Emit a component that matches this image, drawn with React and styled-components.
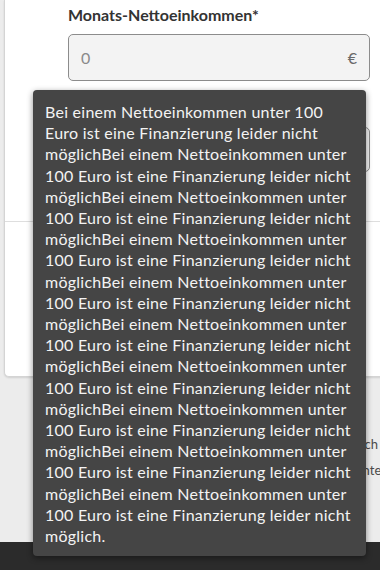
import React from "react";
import styled, { createGlobalStyle } from "styled-components";

const Global = createGlobalStyle`
  html, body { margin: 0; padding: 0; }
  body {
    background: #ececec;
    font-family: Lato, "Open Sans", sans-serif;
    overflow: hidden;
    width: 380px;
    height: 570px;
  }
`;

const Page = styled.div`
  position: relative;
  width: 380px;
  height: 570px;
  display: flex;
  flex-direction: column;
  overflow: hidden;
`;

const Card = styled.div`
  margin-left: 4px;
  width: 380px;
  flex: 0 0 auto;
  background: #fff;
  border: 1px solid #d4d4d4;
  border-top: none;
  border-right: none;
  border-radius: 0 0 0 5px;
  box-shadow: 0 1px 2px rgba(0, 0, 0, 0.12);
  display: flex;
  flex-direction: column;
`;

const Form = styled.div`
  padding: 5px 15px 49px 63px;
  display: flex;
  flex-direction: column;
  gap: 17px;
`;

const Field = styled.div`
  display: flex;
  flex-direction: column;
  gap: 9px;
`;

const Label = styled.div`
  font-weight: 700;
  font-size: 16px;
  line-height: 20px;
  color: #333;
`;

const InputBox = styled.div`
  height: ${(p) => p.$h}px;
  box-sizing: border-box;
  border: 1px solid #8c8c8c;
  border-radius: 5px;
  background: #f3f3f3;
  display: flex;
  align-items: center;
  justify-content: space-between;
  padding: 0 12px 0 12px;
  font-size: 16px;
  color: #8a8a8a;
`;

const Unit = styled.span`
  color: #6a6a6a;
`;

const Divider = styled.div`
  height: 1px;
  background: #dedede;
`;

const CardBottom = styled.div`
  height: 154px;
`;

const Notes = styled.div`
  margin-top: 58px;
  width: 378px;
  display: flex;
  flex-direction: column;
  align-items: flex-end;
  gap: 8px;
  font-size: 13px;
  line-height: 18px;
  color: #4a4a4a;
`;

const NoteLine = styled.div`
  white-space: nowrap;
  margin-right: ${(p) => (p.$overhang ? "-8px" : "0")};
`;

const Footer = styled.div`
  margin-top: auto;
  height: 28px;
  background: #2b2b2b;
`;

const Tooltip = styled.div`
  position: absolute;
  left: 33px;
  top: 90px;
  width: 333px;
  box-sizing: border-box;
  padding: 11px 15px 10px 12px;
  background: #454545;
  color: #f3f3f3;
  border-radius: 4px;
  box-shadow: 0 2px 6px rgba(0, 0, 0, 0.45);
  font-size: 16px;
  letter-spacing: 0.25px;
  line-height: 21.2px;
  overflow-wrap: break-word;
`;

const sentence =
  "Bei einem Nettoeinkommen unter 100 Euro ist eine Finanzierung leider nicht möglich";

export default function App() {
  const text = Array.from({ length: 10 }, () => sentence).join("") + ".";
  return (
    <>
      <Global />
      <Page>
        <Card>
          <Form>
            <Field>
              <Label>Monats-Nettoeinkommen*</Label>
              <InputBox $h={47}>
                <span>0</span>
                <Unit>€</Unit>
              </InputBox>
            </Field>
            <Field>
              <Label>Wohnkosten*</Label>
              <InputBox $h={45}>
                <span>0</span>
                <Unit>€</Unit>
              </InputBox>
            </Field>
          </Form>
          <Divider />
          <CardBottom />
        </Card>
        <Notes>
          <NoteLine>Mit dem Absenden bestätige ich</NoteLine>
          <NoteLine $overhang>die Datenschutzhinweise unter</NoteLine>
        </Notes>
        <Footer />
        <Tooltip>{text}</Tooltip>
      </Page>
    </>
  );
}
